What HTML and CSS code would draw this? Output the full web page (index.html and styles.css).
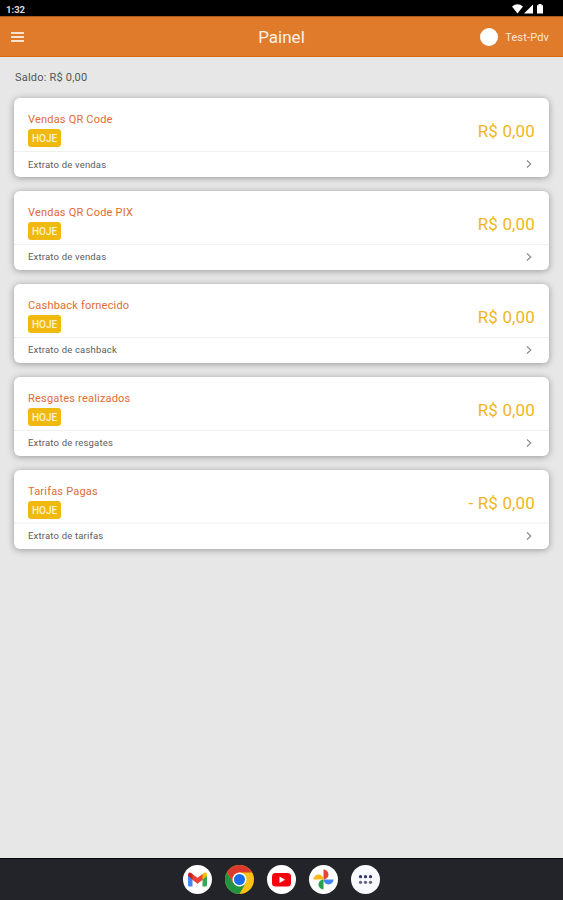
FILE: index.html
```html
<!DOCTYPE html>
<html lang="pt-BR">
<head>
  <meta charset="UTF-8">
  <meta name="viewport" content="width=device-width, initial-scale=1.0">
  <title>Painel</title>
  <link rel="stylesheet" href="styles.css">
</head>
<body>
  <div class="status-bar">
    <span class="clock">1:32</span>
    <svg class="status-icons" width="32" height="10" viewBox="0 0 32 10">
      <path d="M0 2.4Q5.5-1.8 11 2.4L5.5 9.5Z"/>
      <path d="M12 9.5L21 0.5V9.5Z"/>
      <path d="M25 1.3h1.5V0h3v1.3H31V9.5H25Z"/>
    </svg>
  </div>

  <header class="header">
    <button class="menu" aria-label="Menu"><span></span><span></span><span></span></button>
    <h1>Painel</h1>
    <div class="user">
      <span class="avatar"></span>
      <span class="user-name">Test-Pdv</span>
    </div>
  </header>

  <main class="content">
    <p class="balance">Saldo: R$ 0,00</p>

    <section class="card">
      <div class="card-body">
        <div>
          <h2>Vendas QR Code</h2>
          <span class="badge">HOJE</span>
        </div>
        <div class="amount">R$ 0,00</div>
      </div>
      <a class="card-link">Extrato de vendas
        <svg class="chevron" width="6" height="8" viewBox="0 0 6 8"><path d="M1 0.5L4.8 4L1 7.5"/></svg>
      </a>
    </section>

    <section class="card">
      <div class="card-body">
        <div>
          <h2>Vendas QR Code PIX</h2>
          <span class="badge">HOJE</span>
        </div>
        <div class="amount">R$ 0,00</div>
      </div>
      <a class="card-link">Extrato de vendas
        <svg class="chevron" width="6" height="8" viewBox="0 0 6 8"><path d="M1 0.5L4.8 4L1 7.5"/></svg>
      </a>
    </section>

    <section class="card">
      <div class="card-body">
        <div>
          <h2>Cashback fornecido</h2>
          <span class="badge">HOJE</span>
        </div>
        <div class="amount">R$ 0,00</div>
      </div>
      <a class="card-link">Extrato de cashback
        <svg class="chevron" width="6" height="8" viewBox="0 0 6 8"><path d="M1 0.5L4.8 4L1 7.5"/></svg>
      </a>
    </section>

    <section class="card">
      <div class="card-body">
        <div>
          <h2>Resgates realizados</h2>
          <span class="badge">HOJE</span>
        </div>
        <div class="amount">R$ 0,00</div>
      </div>
      <a class="card-link">Extrato de resgates
        <svg class="chevron" width="6" height="8" viewBox="0 0 6 8"><path d="M1 0.5L4.8 4L1 7.5"/></svg>
      </a>
    </section>

    <section class="card card-fees">
      <div class="card-body">
        <div>
          <h2>Tarifas Pagas</h2>
          <span class="badge">HOJE</span>
        </div>
        <div class="amount">- R$ 0,00</div>
      </div>
      <a class="card-link">Extrato de tarifas
        <svg class="chevron" width="6" height="8" viewBox="0 0 6 8"><path d="M1 0.5L4.8 4L1 7.5"/></svg>
      </a>
    </section>
  </main>

  <nav class="taskbar">
    <!-- Gmail -->
    <svg width="29" height="29" viewBox="0 0 29 29">
      <circle cx="14.5" cy="14.5" r="14.5" fill="#fff"/>
      <path d="M5 10L9.5 13V21.5H6.5Q5 21.5 5 20Z" fill="#4285f4"/>
      <path d="M24 10L19.5 13V21.5H22.5Q24 21.5 24 20Z" fill="#34a853"/>
      <path d="M9 8.7L14.5 12.8L20 8.7V14.5L14.5 18.7L9 14.5Z" fill="#ea4335"/>
      <path d="M5 11V9.5Q5.5 6 9.5 9V14.5Z" fill="#c5221f"/>
      <path d="M24 11V9.5Q23.5 6 19.5 9V14.5Z" fill="#fbbc04"/>
    </svg>
    <!-- Chrome -->
    <svg width="29" height="29" viewBox="0 0 29 29">
      <circle cx="14.5" cy="14.5" r="14.5" fill="#fbc116"/>
      <path d="M14.5 14.5L8.4 18L1.9 7.2A14.5 14.5 0 0 0 14.5 29L20.6 18Z" fill="#229342"/>
      <path d="M1.9 7.2A14.5 14.5 0 0 1 27.1 7.5H14.5L8.4 18Z" fill="#dc3a2d"/>
      <circle cx="14.5" cy="14.5" r="7" fill="#fff"/>
      <circle cx="14.5" cy="14.5" r="5.5" fill="#1a6de8"/>
    </svg>
    <!-- YouTube -->
    <svg width="29" height="29" viewBox="0 0 29 29">
      <circle cx="14.5" cy="14.5" r="14.5" fill="#fff"/>
      <rect x="5" y="8" width="19" height="13.5" rx="3.5" fill="#f8000c"/>
      <path d="M12.5 11.5V18L18 14.7Z" fill="#fff"/>
    </svg>
    <!-- Photos -->
    <svg width="29" height="29" viewBox="0 0 29 29">
      <circle cx="14.5" cy="14.5" r="14.5" fill="#fff"/>
      <path d="M14.5 14.5V4.5A5 5 0 0 1 14.5 14.5Z" fill="#ea4335"/>
      <path d="M14.5 14.5H24.5A5 5 0 0 1 14.5 14.5Z" fill="#4285f4"/>
      <path d="M14.5 14.5V24.5A5 5 0 0 1 14.5 14.5Z" fill="#24a34c"/>
      <path d="M14.5 14.5H4.5A5 5 0 0 1 14.5 14.5Z" fill="#f8b91b"/>
    </svg>
    <!-- All apps -->
    <svg width="29" height="29" viewBox="0 0 29 29">
      <circle cx="14.5" cy="14.5" r="14.5" fill="#f8f8ff"/>
      <g fill="#303469">
        <circle cx="9.5" cy="11.7" r="1.6"/>
        <circle cx="14.5" cy="11.7" r="1.6"/>
        <circle cx="19.5" cy="11.7" r="1.6"/>
      </g>
      <g fill="#62627a">
        <circle cx="9.5" cy="17.3" r="1.6"/>
        <circle cx="14.5" cy="17.3" r="1.6"/>
        <circle cx="19.5" cy="17.3" r="1.6"/>
      </g>
    </svg>
  </nav>
</body>
</html>
```
FILE: styles.css
```css
* {
  box-sizing: border-box;
}
body {
  display: flex;
  flex-direction: column;
  height: 900px;
  margin: 0;
  background: #e7e7e7;
  font-family: Roboto, sans-serif;
  overflow: hidden;
}
h1, h2, p {
  margin: 0;
}
.status-bar {
  display: flex;
  justify-content: space-between;
  height: 16px;
  padding: 4px 19px 0 6px;
  background: #000;
}
.clock {
  font-size: 9.5px;
  font-weight: bold;
  line-height: 11px;
  color: #ddd;
}
.status-icons {
  fill: #fff;
}
.header {
  display: grid;
  grid-template-columns: 1fr auto 1fr;
  align-items: center;
  height: 41px;
  padding: 0 14px 0 11px;
  background: #e07b2b;
  border-top: 1px solid #a85a20;
  border-bottom: 1px solid #d9680f;
  color: #fff;
}
.menu {
  display: flex;
  flex-direction: column;
  gap: 2px;
  width: 13px;
  padding: 0;
  border: 0;
  background: none;
}
.menu span {
  height: 2px;
  background: #fbe3d0;
}
h1 {
  padding-left: 3px;
  font-size: 17px;
  font-weight: normal;
  color: #fff1e5;
}
.user {
  display: flex;
  align-items: center;
  justify-content: flex-end;
  gap: 7px;
}
.avatar {
  width: 18px;
  height: 18px;
  border-radius: 50%;
  background: #fff;
}
.user-name {
  padding-top: 1px;
  font-size: 11px;
  letter-spacing: 0.15px;
  color: #fde6d5;
}
.content {
  flex: 1;
  padding: 13px 14px 0;
}
.balance {
  height: 28px;
  padding-left: 1px;
  font-size: 11px;
  letter-spacing: 0.2px;
  line-height: 15px;
  color: #555;
}
.card {
  height: 79px;
  margin-bottom: 13.9px;
  border-radius: 6px;
  background: #fff;
  box-shadow: 0 1px 7px rgba(0,0,0,0.35);
}
.card-body {
  display: flex;
  justify-content: space-between;
  height: 54px;
  padding: 14px 14px 0;
  border-bottom: 1px solid #f0f0f0;
}
.card-fees .card-body {
  border-bottom: 2px solid #f7f7f7;
}
h2 {
  height: 17px;
  font-size: 11px;
  font-weight: normal;
  letter-spacing: 0.2px;
  line-height: 15px;
  color: #e06c35;
}
.badge {
  display: block;
  width: 33px;
  height: 18px;
  border-radius: 3px;
  background: #efb90f;
  font-size: 10px;
  font-weight: 500;
  line-height: 19px;
  text-align: center;
  color: #fff3c8;
}
.amount {
  padding-top: 9px;
  font-size: 17px;
  letter-spacing: 0.15px;
  line-height: 20px;
  color: #efb61c;
}
.card-link {
  display: flex;
  align-items: center;
  justify-content: space-between;
  height: 25px;
  padding: 0 17px 1px 14px;
  font-size: 9.5px;
  letter-spacing: 0.18px;
  color: #5c5c5c;
}
.chevron {
  fill: none;
  stroke: #888;
  stroke-width: 1.1;
}
.taskbar {
  display: flex;
  justify-content: center;
  align-items: center;
  gap: 13.2px;
  height: 42px;
  background: #232429;
  border-top: 1px solid #08080a;
}
```
